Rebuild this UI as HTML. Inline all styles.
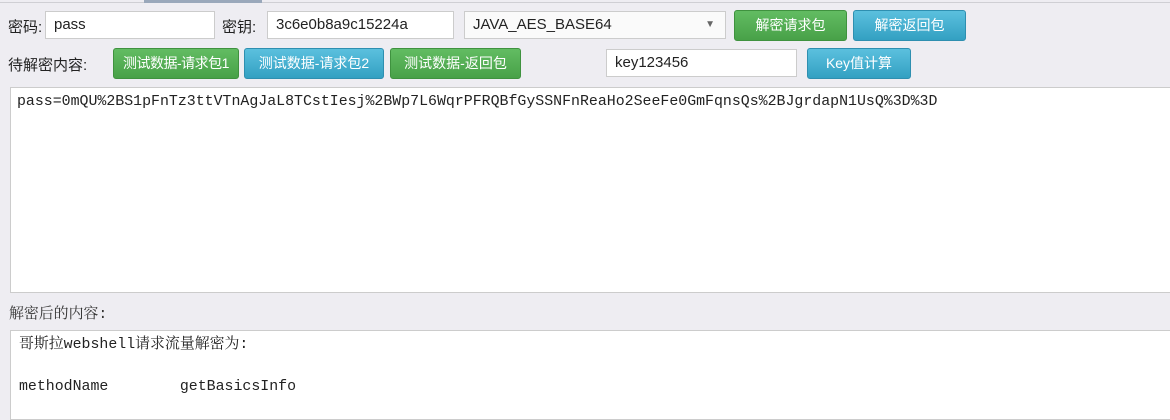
<!DOCTYPE html><html><head><meta charset="utf-8"><style>
body{margin:0;width:1170px;height:408px;background:#eeedf2;position:relative;overflow:hidden;font-family:"Liberation Sans","Microsoft YaHei","Noto Sans CJK SC",sans-serif;font-size:15px;color:#222}
.a{position:absolute}
.inp{position:absolute;background:#fff;border:1px solid #ccc;box-sizing:border-box;padding-left:8px;line-height:26px;font-size:15px}
.btn{position:absolute;color:#fff;border-radius:3px;box-sizing:border-box;text-align:center;font-size:14px;white-space:nowrap}
.g{background:linear-gradient(#62bc62,#48a148);border:1px solid #3f923f}
.b{background:linear-gradient(#5bc0de,#33a0c2);border:1px solid #2e8fb0}
.mono{font-family:"Liberation Mono","Noto Serif CJK SC",monospace;font-size:14.9px}
</style></head><body>
<div class="a" style="left:0;top:2px;width:1170px;height:1px;background:#cfcfd4"></div>
<div class="a" style="left:144px;top:0;width:118px;height:3px;background:#9aa8bb"></div>
<div class="a" style="left:8px;top:16px">密码:</div>
<div class="inp" style="left:45px;top:11px;width:170px;height:28px">pass</div>
<div class="a" style="left:222px;top:16px">密钥:</div>
<div class="inp" style="left:267px;top:11px;width:187px;height:28px">3c6e0b8a9c15224a</div>
<div class="inp" style="left:464px;top:11px;width:262px;height:28px;background:#fafafa">JAVA_AES_BASE64<span class="a" style="right:10px;top:0;font-size:10px;color:#666">▼</span></div>
<div class="btn g" style="left:734px;top:10px;width:113px;height:31px;line-height:29px">解密请求包</div>
<div class="btn b" style="left:853px;top:10px;width:113px;height:31px;line-height:29px">解密返回包</div>
<div class="a" style="left:8px;top:54px">待解密内容:</div>
<div class="btn g" style="left:113px;top:48px;width:126px;height:31px;line-height:29px;letter-spacing:-0.5px">测试数据-请求包1</div>
<div class="btn b" style="left:244px;top:48px;width:140px;height:31px;line-height:29px">测试数据-请求包2</div>
<div class="btn g" style="left:390px;top:48px;width:131px;height:31px;line-height:29px">测试数据-返回包</div>
<div class="inp" style="left:606px;top:49px;width:191px;height:28px">key123456</div>
<div class="btn b" style="left:807px;top:48px;width:104px;height:31px;line-height:29px">Key值计算</div>
<div class="a mono" style="left:10px;top:87px;width:1170px;height:206px;background:#fff;border:1px solid #ccc;box-sizing:border-box;padding:6px 6px">pass=0mQU%2BS1pFnTz3ttVTnAgJaL8TCstIesj%2BWp7L6WqrPFRQBfGySSNFnReaHo2SeeFe0GmFqnsQs%2BJgrdapN1UsQ%3D%3D</div>
<div class="a mono" style="left:9px;top:302px;color:#333">解密后的内容:</div>
<div class="a mono" style="left:10px;top:330px;width:1170px;height:90px;background:#fff;border:1px solid #ccc;box-sizing:border-box;padding:4px 8px;line-height:21px;white-space:pre">哥斯拉webshell请求流量解密为:

methodName        getBasicsInfo</div>
</body></html>
